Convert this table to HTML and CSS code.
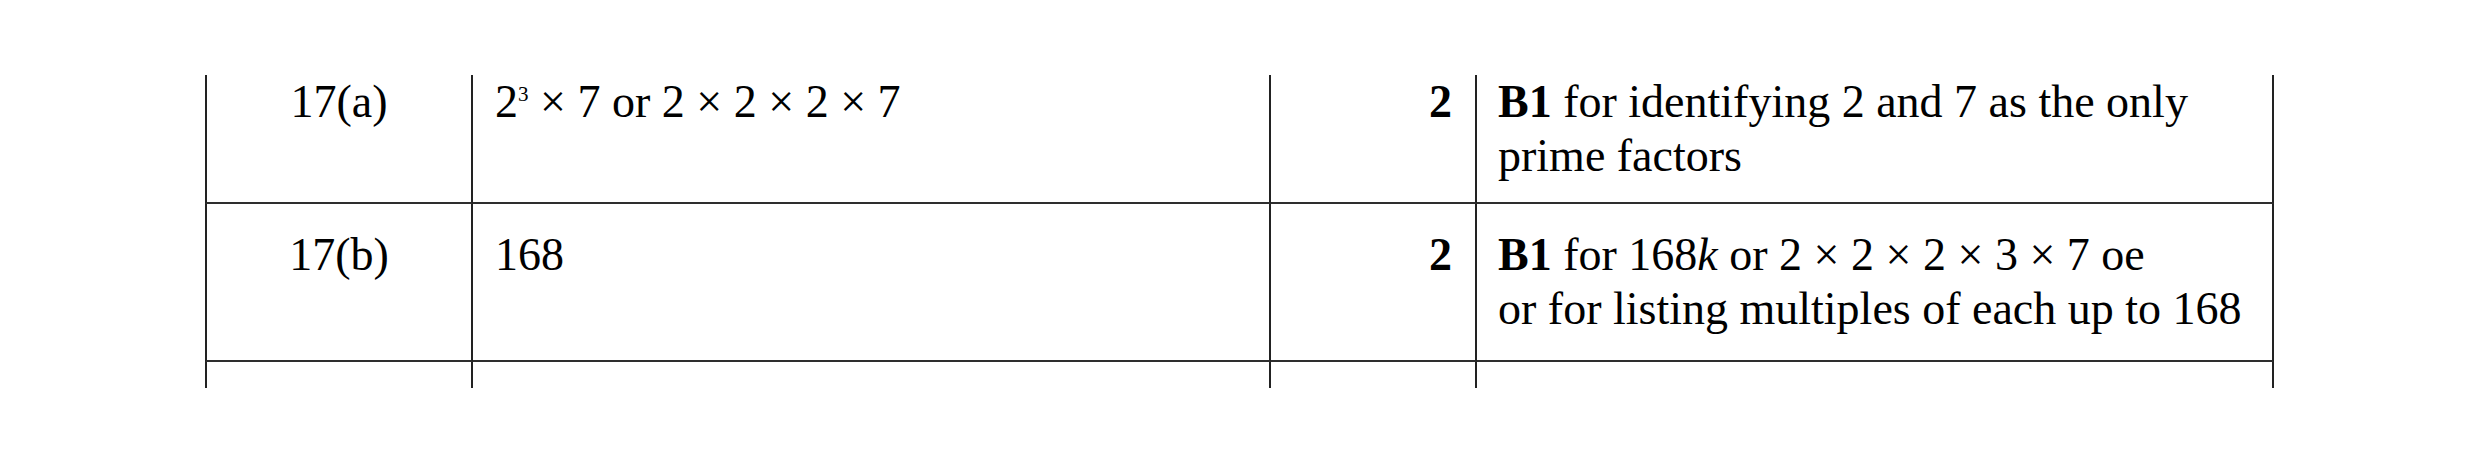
FILE: index.html
```html
<!DOCTYPE html>
<html lang="en">
<head>
<meta charset="utf-8">
<title>Mark scheme 17</title>
<link rel="stylesheet" href="styles.css">
</head>
<body>
<table class="scheme">
  <tbody>
    <tr class="row row-first">
      <td class="cell cell-q">17(a)</td>
      <td class="cell cell-ans">2<sup class="sup">3</sup> × 7 or 2 × 2 × 2 × 7</td>
      <td class="cell cell-mark"><b>2</b></td>
      <td class="cell cell-notes"><b>B1</b> for identifying 2 and 7 as the only prime factors</td>
    </tr>
    <tr class="row">
      <td class="cell cell-q">17(b)</td>
      <td class="cell cell-ans">168</td>
      <td class="cell cell-mark"><b>2</b></td>
      <td class="cell cell-notes"><b>B1</b> for 168<i>k</i> or 2 × 2 × 2 × 3 × 7 oe<br>or for listing multiples of each up to 168</td>
    </tr>
    <tr class="row row-stub">
      <td class="cell cell-q"></td>
      <td class="cell cell-ans"></td>
      <td class="cell cell-mark"></td>
      <td class="cell cell-notes"></td>
    </tr>
  </tbody>
</table>
</body>
</html>
```
FILE: styles.css
```css
html, body {
  margin: 0;
  padding: 0;
  background: #ffffff;
}

body {
  font-family: "Liberation Serif", "Times New Roman", serif;
  font-size: 46px;
  line-height: 54px;
  color: #000000;
}

.scheme {
  margin: 75px 0 0 205px;
  width: 2069px;
  table-layout: fixed;
  border-collapse: separate;
  border-spacing: 0;
}

.cell {
  box-sizing: border-box;
  vertical-align: top;
  padding: 24px 21px 24px 21px;
  border-right: 2px solid #222222;
  border-bottom: 2px solid #2e2e2e;
}

.cell-q {
  width: 268px;
  border-left: 2px solid #222222;
  text-align: center;
  padding-left: 0;
  padding-right: 0;
}

.cell-ans {
  width: 798px;
  padding-left: 22px;
}

.cell-mark {
  width: 206px;
  text-align: right;
  padding-right: 23px;
}

.cell-notes {
  width: 797px;
}

.row-first .cell {
  padding-top: 0;
  padding-bottom: 19px;
}

.row-stub .cell {
  height: 26px;
  padding: 0;
  border-bottom: none;
}

.sup {
  font-size: 21px;
  line-height: 0;
  vertical-align: 16px;
}

b {
  font-weight: bold;
}

i {
  font-style: italic;
}
```
